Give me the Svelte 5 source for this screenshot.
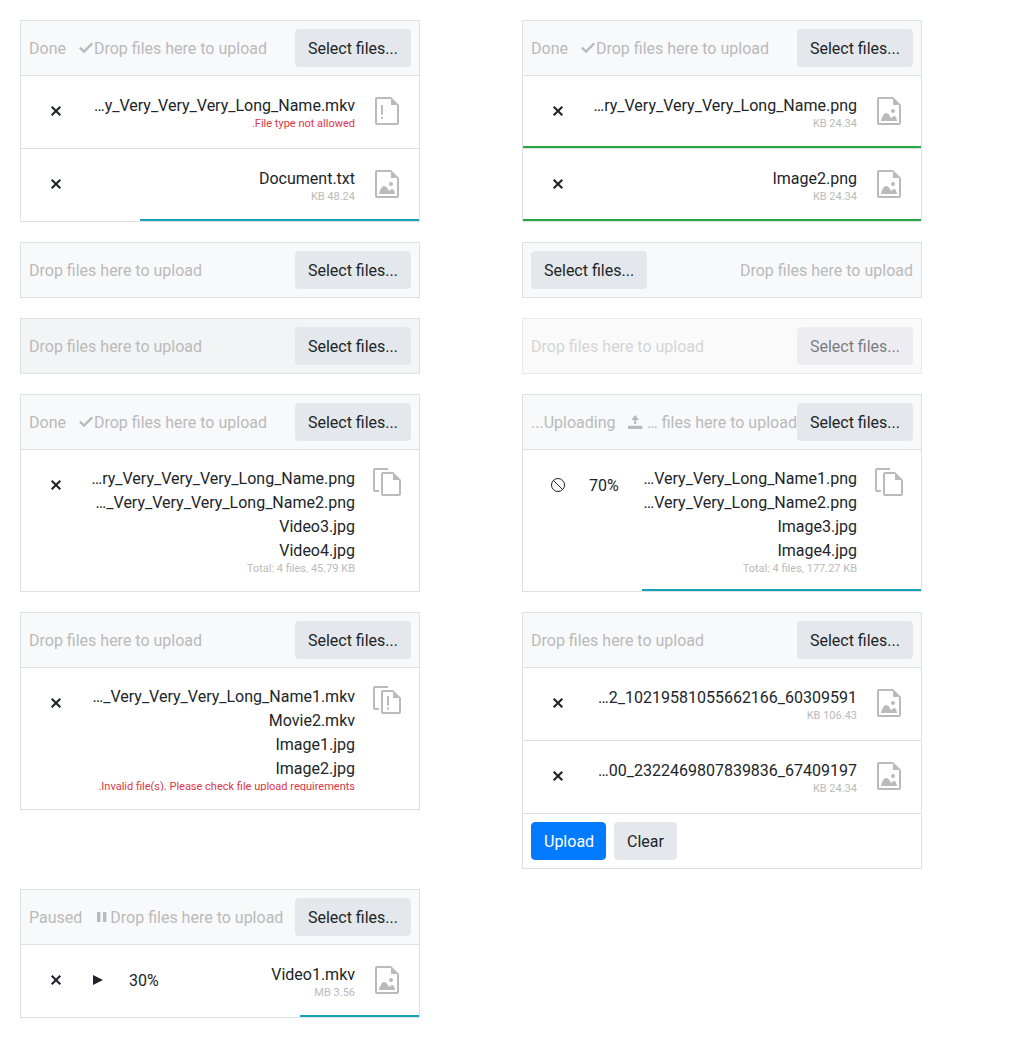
<script>
  const uploads = [
    {
      status: 'Done', statusIcon: 'check',
      files: [
        { names: ['…y_Very_Very_Very_Long_Name.mkv'], summary: '.File type not allowed', error: true, icon: 'file-error' },
        { names: ['Document.txt'], summary: 'KB 48.24', icon: 'image', progress: 70 },
      ],
    },
    {
      status: 'Done', statusIcon: 'check',
      files: [
        { names: ['…ry_Very_Very_Very_Long_Name.png'], summary: 'KB 24.34', icon: 'image', progress: 100, success: true },
        { names: ['Image2.png'], summary: 'KB 24.34', icon: 'image', progress: 100, success: true },
      ],
    },
    {},
    { reverse: true },
    { hover: true },
    { disabled: true },
    {
      status: 'Done', statusIcon: 'check',
      files: [
        {
          names: ['…ry_Very_Very_Very_Long_Name.png', '…_Very_Very_Very_Long_Name2.png', 'Video3.jpg', 'Video4.jpg'],
          summary: 'Total: 4 files, 45.79 KB', icon: 'files',
        },
      ],
    },
    {
      status: '...Uploading', statusIcon: 'upload', hint: '… files here to upload', tight: true,
      files: [
        {
          names: ['…Very_Very_Long_Name1.png', '…Very_Very_Long_Name2.png', 'Image3.jpg', 'Image4.jpg'],
          summary: 'Total: 4 files, 177.27 KB', icon: 'files', actions: ['cancel'], percent: '70%', progress: 70,
        },
      ],
    },
    {
      files: [
        {
          names: ['…_Very_Very_Very_Long_Name1.mkv', 'Movie2.mkv', 'Image1.jpg', 'Image2.jpg'],
          summary: '.Invalid file(s). Please check file upload requirements', error: true, icon: 'files-error',
        },
      ],
    },
    {
      footer: true,
      files: [
        { names: ['…2_10219581055662166_60309591'], summary: 'KB 106.43', icon: 'image' },
        { names: ['…00_2322469807839836_67409197'], summary: 'KB 24.34', icon: 'image' },
      ],
    },
    {
      status: 'Paused', statusIcon: 'pause',
      files: [
        { names: ['Video1.mkv'], summary: 'MB 3.56', icon: 'image', actions: ['close', 'play'], percent: '30%', progress: 30 },
      ],
    },
  ];
</script>

{#snippet glyph(name)}
  <svg class="glyph" viewBox="0 0 16 16" aria-hidden="true">
    {#if name === 'check'}
      <path d="M1.9 7.6 6 11.6 14.2 3.4" fill="none" stroke="currentColor" stroke-width="2.3" />
    {:else if name === 'upload'}
      <path d="M1 11.800h14.300v3.300H1zM8.200 1l3.800 5H9.200v4H7.200V6H4.400z" fill="currentColor" />
    {:else if name === 'pause'}
      <path d="M3 3h3.400v10H3zM9 3h3.400v10H9z" fill="currentColor" />
    {:else if name === 'play'}
      <path d="M3 3l10 5-10 5z" fill="currentColor" />
    {:else if name === 'cancel'}
      <circle cx="8" cy="8" r="6.5" fill="none" stroke="currentColor" />
      <path d="M3.400 3.400l9.200 9.200" fill="none" stroke="currentColor" />
    {:else}
      <path d="M3.700 3.700l8.600 8.600M12.300 3.700l-8.600 8.600" fill="none" stroke="currentColor" stroke-width="2.1" />
    {/if}
  </svg>
{/snippet}

{#snippet fileIcon(name)}
  <svg class="file-icon" viewBox="0 0 32 32" aria-hidden="true">
    {#if name.startsWith('files')}
      <path d="M17 2H4a2 2 0 0 0-2 2v20a2 2 0 0 0 2 2h4v-2H4V4h13z" fill="currentColor" />
      <path d="M22 6H12a2 2 0 0 0-2 2v20a2 2 0 0 0 2 2h16a2 2 0 0 0 2-2V14zM28 28H12V8h10v6h6z" fill="currentColor" />
      {#if name === 'files-error'}
        <path d="M16 12h2v9.500h-2zM16 23.500h2v2h-2z" fill="currentColor" />
      {/if}
    {:else}
      <path d="M20 2H6a2 2 0 0 0-2 2v24a2 2 0 0 0 2 2h20a2 2 0 0 0 2-2V10zM26 28H6V4h14v6h6z" fill="currentColor" />
      {#if name === 'file-error'}
        <path d="M10 10h2v9.500h-2zM10 22h2v2h-2z" fill="currentColor" />
      {:else}
        <circle cx="20" cy="16" r="2" fill="currentColor" />
        <path d="M8 26c.5-3 2.500-8 5-8 2.400 0 3.600 2.500 5.200 5.200.8-1 1.600-2.200 3-2.200 1.600 0 2.500 3 2.800 5z" fill="currentColor" />
      {/if}
    {/if}
  </svg>
{/snippet}

<main>
  {#each uploads as u}
    <section class="upload" class:disabled={u.disabled}>
      <header class:reverse={u.reverse} class:hover={u.hover}>
        {#if u.status}
          <div class="status">
            <span>{u.status}</span>
            {@render glyph(u.statusIcon)}
          </div>
        {/if}
        <span class="hint" class:tight={u.tight}>{u.hint ?? 'Drop files here to upload'}</span>
        <button>Select files...</button>
      </header>
      {#if u.files}
        <ul>
          {#each u.files as f}
            <li class:multiple={f.names.length > 1}>
              <div class="actions">
                {#each f.actions ?? ['close'] as a}
                  <span class="action">{@render glyph(a)}</span>
                {/each}
                {#if f.percent}<span class="percent">{f.percent}</span>{/if}
              </div>
              <div class="info">
                {#each f.names as n}
                  <span class="name">{n}</span>
                {/each}
                <span class="summary" class:error={f.error}>{f.summary}</span>
              </div>
              {@render fileIcon(f.icon)}
              {#if f.progress}
                <div class="progress" class:success={f.success} style:width="{f.progress}%"></div>
              {/if}
            </li>
          {/each}
        </ul>
      {/if}
      {#if u.footer}
        <footer>
          <button class="primary">Upload</button>
          <button>Clear</button>
        </footer>
      {/if}
    </section>
  {/each}
</main>

<style>
  :global(body) {
    margin: 0;
    background: #fff;
  }

  main {
    display: grid;
    grid-template-columns: 400px 400px;
    gap: 20px 102px;
    align-items: start;
    padding: 20px;
    font: 16px/24px Roboto, sans-serif;
    color: #212529;
  }

  .upload {
    box-sizing: border-box;
    border: 1px solid #dee0e6;
    background: #fff;
  }

  .disabled {
    opacity: 0.6;
    border-color: #dcdcdc;
  }

  header {
    display: flex;
    align-items: center;
    padding: 8px;
    background: #f8f9fb;
    color: #bababa;
    white-space: nowrap;
  }

  header.reverse {
    flex-direction: row-reverse;
  }

  header.reverse .hint {
    text-align: right;
  }

  header.hover {
    background: #f3f4f6;
  }

  .disabled header {
    background: #f7f7f7;
  }

  .status {
    display: flex;
    align-items: center;
    gap: 12px;
  }

  .status span,
  .hint,
  .percent {
    padding-top: 2px;
  }

  .hint {
    flex: 1;
  }

  .hint.tight {
    text-align: right;
  }

  .glyph {
    display: block;
    flex: none;
    width: 16px;
    height: 16px;
  }

  button {
    box-sizing: border-box;
    height: 38px;
    padding: 7px 12px 5px;
    border: 1px solid #e4e7eb;
    border-radius: 4px;
    background: #e4e7eb;
    color: #212529;
    font: inherit;
  }

  .disabled button {
    border-color: #e2e2e8;
    background: #e2e2e8;
  }

  button.primary {
    width: 75px;
    border-color: #007bff;
    background: #007bff;
    color: #fff;
  }

  ul {
    margin: 0;
    padding: 0;
    list-style: none;
  }

  li {
    position: relative;
    display: flex;
    align-items: flex-start;
    box-sizing: content-box;
    height: 72px;
    border-top: 1px solid #dee0e6;
  }

  li.multiple {
    height: 141px;
  }

  .actions {
    display: flex;
    align-items: center;
    height: 24px;
    margin: 23px 0 0 14px;
  }

  .action {
    display: flex;
    justify-content: center;
    width: 42px;
  }

  .percent {
    margin-left: 10px;
  }

  .info {
    display: flex;
    flex: 1;
    flex-direction: column;
    align-items: flex-end;
    padding-top: 18px;
    white-space: nowrap;
  }

  .multiple .info {
    padding-top: 17px;
  }

  .summary {
    font-size: 11px;
    line-height: 11px;
    color: #bababa;
  }

  .multiple .summary {
    overflow: hidden;
    height: 10px;
  }

  .summary.error {
    color: #dc3545;
  }

  .file-icon {
    flex: none;
    width: 32px;
    height: 32px;
    margin: 19px 16px 0;
    color: #bababa;
  }

  .multiple .file-icon {
    margin-top: 16px;
  }

  .progress {
    position: absolute;
    right: 0;
    bottom: 0;
    height: 2px;
    background: #17a2b8;
  }

  .progress.success {
    background: #28a745;
  }

  footer {
    display: flex;
    gap: 8px;
    padding: 8px;
    border-top: 1px solid #dee0e6;
  }
</style>
